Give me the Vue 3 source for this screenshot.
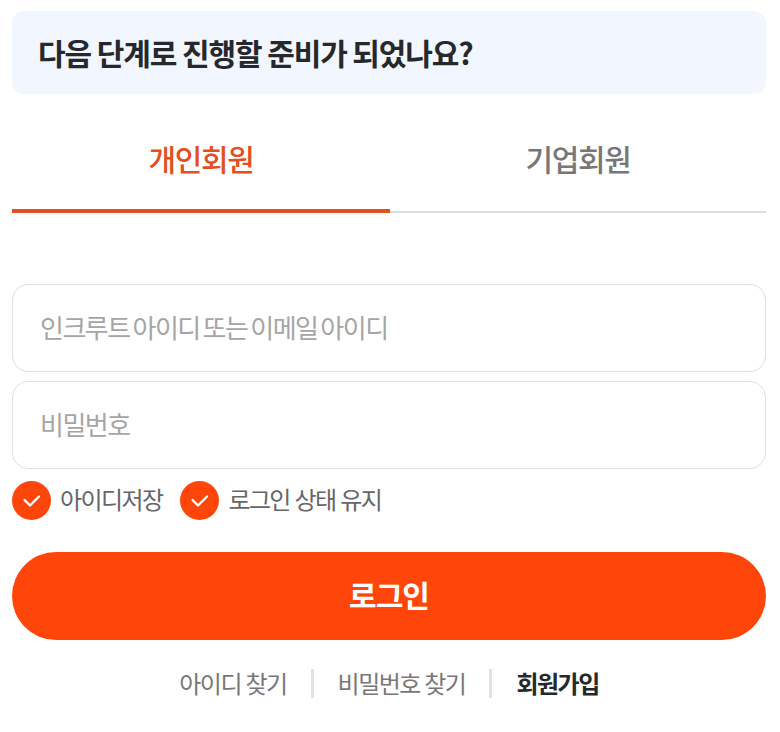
<template>
  <div class="login-page">
    <div class="banner">다음 단계로 진행할 준비가 되었나요?</div>

    <div class="tabs">
      <button class="tab active">개인회원</button>
      <button class="tab">기업회원</button>
    </div>

    <form class="login-form" @submit.prevent>
      <input class="field" type="text" placeholder="인크루트 아이디 또는 이메일 아이디" />
      <input class="field" type="password" placeholder="비밀번호" />

      <div class="options">
        <label v-for="opt in options" :key="opt" class="option">
          <span class="check">
            <svg width="20" height="14" viewBox="0 0 20 14" fill="none">
              <path d="M2.5 6 L8 11.5 L17 2.5" stroke="#fff" stroke-width="2.4" stroke-linecap="round" stroke-linejoin="round" />
            </svg>
          </span>
          <span class="option-text">{{ opt }}</span>
        </label>
      </div>

      <button class="submit" type="submit">로그인</button>
    </form>

    <div class="links">
      <a>아이디 찾기</a>
      <i class="sep"></i>
      <a>비밀번호 찾기</a>
      <i class="sep"></i>
      <a class="strong">회원가입</a>
    </div>
  </div>
</template>

<script setup>
const options = ["아이디저장", "로그인 상태 유지"];
</script>

<style>
html,
body {
  margin: 0;
  background: #fff;
}
</style>

<style scoped>
.login-page {
  box-sizing: border-box;
  width: 780px;
  height: 732px;
  padding: 11px 14px 0 12px;
  font-family: "Noto Sans CJK KR", "Noto Sans", sans-serif;
  overflow: hidden;
}
.banner {
  height: 83px;
  padding-left: 26px;
  display: flex;
  align-items: center;
  background: #f2f6fe;
  border-radius: 12px;
  font-size: 30px;
  font-weight: 700;
  letter-spacing: -1.1px;
  color: #26282b;
}
.banner {
  padding-bottom: 2px;
  box-sizing: border-box;
}
.tabs {
  display: flex;
  height: 119px;
  border-bottom: 2px solid #dcdcdc;
  box-sizing: border-box;
}
.tab {
  flex: 1;
  margin: 0 0 -2px;
  padding: 12px 0 0;
  border: 0;
  border-bottom: 4px solid transparent;
  background: none;
  font-family: inherit;
  font-size: 30px;
  font-weight: 500;
  letter-spacing: -1.4px;
  color: #777;
}
.tab:first-child {
  flex: 0 0 378px;
}
.tab.active {
  color: #e2501f;
  border-bottom-color: #e2501f;
}
.login-form {
  display: flex;
  flex-direction: column;
  margin-top: 71px;
}
.field {
  box-sizing: border-box;
  height: 88px;
  margin-bottom: 9px;
  padding: 0 27px 4px;
  border: 1px solid #e0e0e0;
  border-radius: 16px;
  font-family: inherit;
  font-size: 26px;
  letter-spacing: -1.5px;
  word-spacing: -1.5px;
  outline: none;
}
.field::placeholder {
  color: #a5a5a5;
}
.options {
  display: flex;
  gap: 18px;
  margin-top: 3px;
}
.option {
  display: flex;
  align-items: center;
  gap: 9px;
  font-size: 24px;
  letter-spacing: -1.6px;
  word-spacing: 1px;
  color: #666;
}
.option-text {
  padding-bottom: 4px;
}
.check {
  width: 39px;
  height: 39px;
  border-radius: 50%;
  background: #ff460a;
  display: flex;
  align-items: center;
  justify-content: center;
}
.submit {
  height: 88px;
  margin-top: 32px;
  padding: 0 0 4px;
  border: 0;
  border-radius: 44px;
  background: #ff460a;
  color: #fff;
  font-family: inherit;
  font-size: 30px;
  font-weight: 700;
  letter-spacing: -1px;
}
.links {
  display: flex;
  justify-content: center;
  align-items: center;
  gap: 24px;
  margin-top: 27px;
  font-size: 24px;
  letter-spacing: -1.5px;
  word-spacing: 0.5px;
  color: #777;
}
.links a {
  margin-top: -2px;
}
.sep {
  width: 3px;
  height: 29px;
  background: #e2e2e2;
}
.strong {
  font-weight: 700;
  color: #26282b;
}
</style>
